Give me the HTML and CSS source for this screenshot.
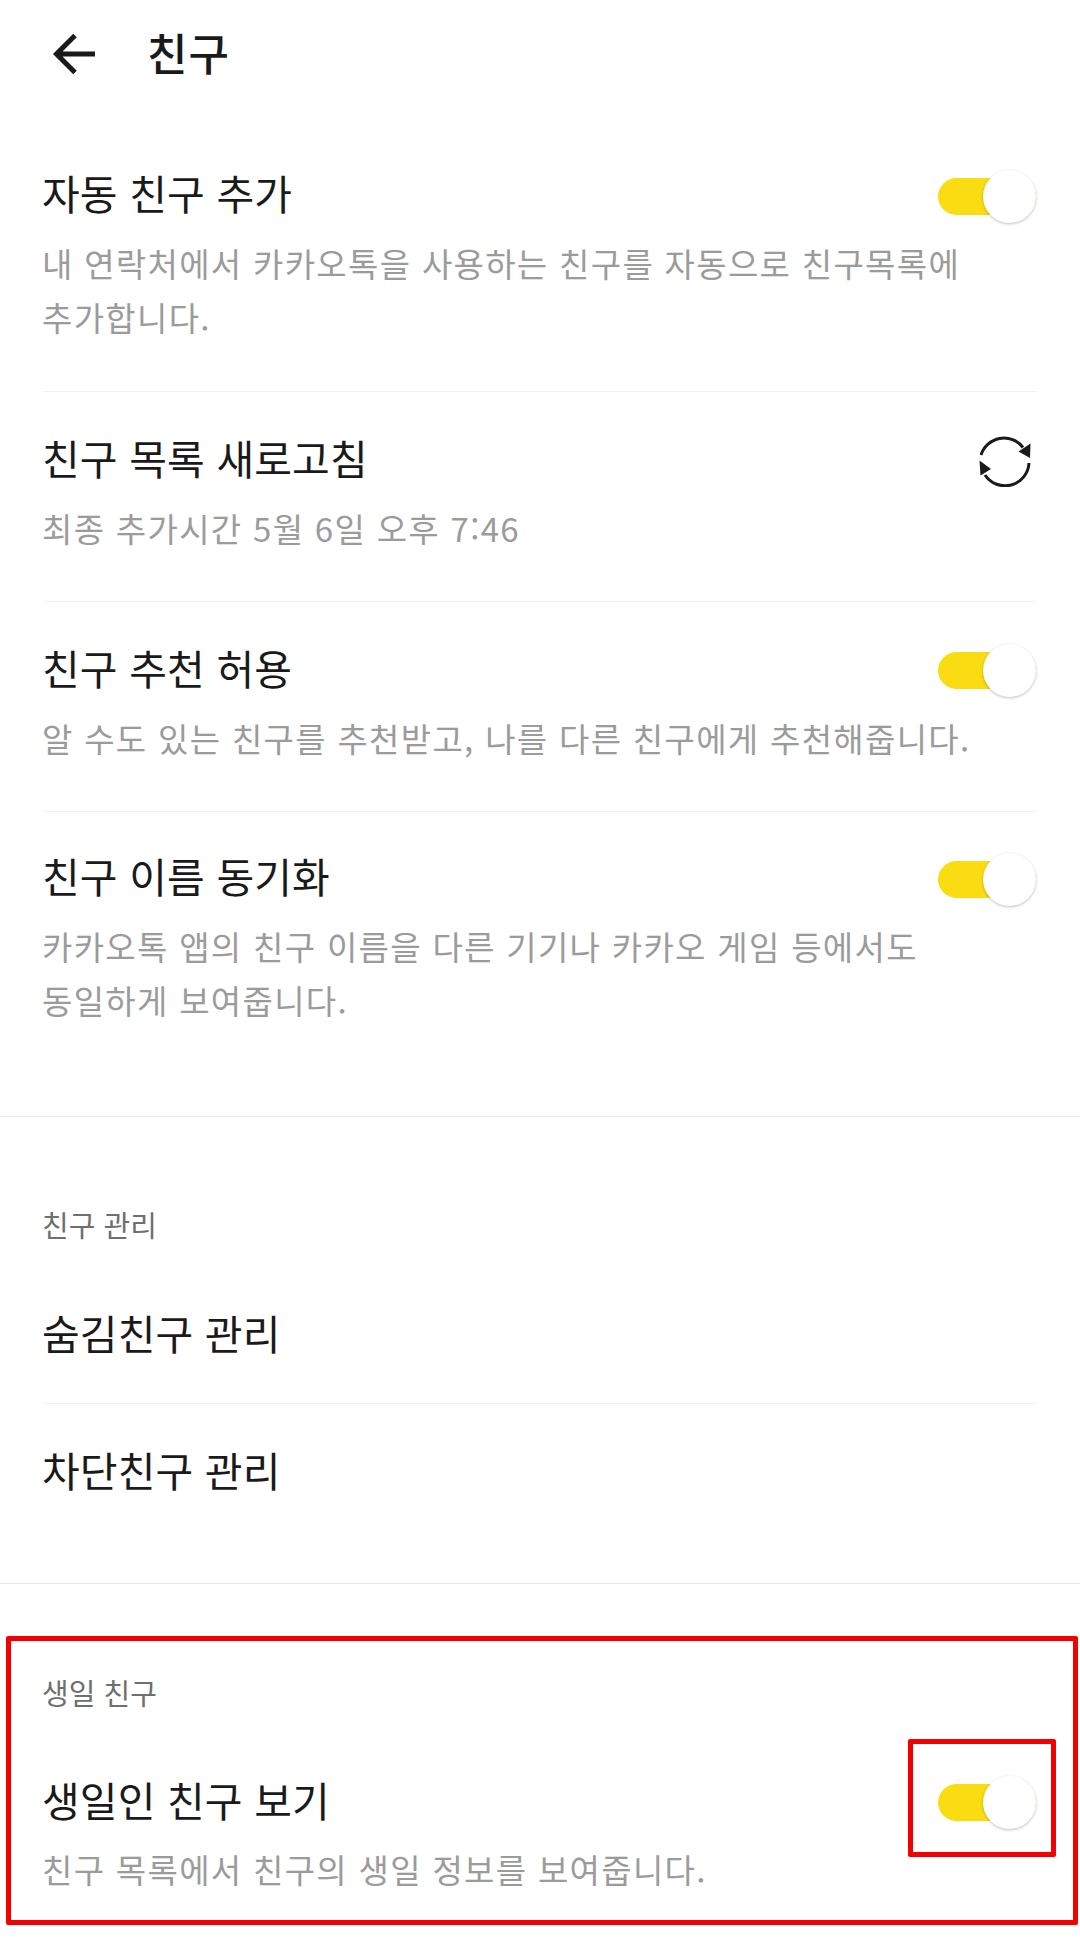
FILE: index.html
```html
<!DOCTYPE html>
<html lang="ko">
<head>
<meta charset="utf-8">
<title>친구</title>
<link rel="stylesheet" href="styles.css">
</head>
<body>
<div class="page">
  <header class="appbar">
    <svg class="back" viewBox="0 0 50 50" width="50" height="50" aria-hidden="true"><path d="M46 25H7M26 6.500 7.500 25 26 43.500" fill="none" stroke="#1a1a1a" stroke-width="5"/></svg>
    <h1 class="appbar-title">친구</h1>
  </header>

  <section class="section section-first">
    <div class="row row-first">
      <div class="row-text">
        <div class="row-title">자동 친구 추가</div>
        <p class="row-desc">내 연락처에서 카카오톡을 사용하는 친구를 자동으로 친구목록에 추가합니다.</p>
      </div>
      <span class="switch"><span class="knob"></span></span>
    </div>
    <div class="row row-mid">
      <div class="row-text">
        <div class="row-title">친구 목록 새로고침</div>
        <p class="row-desc">최종 추가시간 5월 6일 오후 7:46</p>
      </div>
      <svg class="refresh" viewBox="0 0 54 54" width="54" height="54" aria-hidden="true">
        <path d="M3 22A24 24 0 0 1 45 14.500" fill="none" stroke="#1a1a1a" stroke-width="3"/>
        <path d="M40.500 18.500 52.500 10.500 52 25Z" fill="#1a1a1a"/>
        <path d="M51 30A24 24 0 0 1 7 42" fill="none" stroke="#1a1a1a" stroke-width="3"/>
        <path d="M1.500 27.500 13 36 2.500 42.500Z" fill="#1a1a1a"/>
      </svg>
    </div>
    <div class="row row-mid">
      <div class="row-text">
        <div class="row-title">친구 추천 허용</div>
        <p class="row-desc">알 수도 있는 친구를 추천받고, 나를 다른 친구에게 추천해줍니다.</p>
      </div>
      <span class="switch"><span class="knob"></span></span>
    </div>
    <div class="row row-name">
      <div class="row-text">
        <div class="row-title">친구 이름 동기화</div>
        <p class="row-desc">카카오톡 앱의 친구 이름을 다른 기기나 카카오 게임 등에서도 동일하게 보여줍니다.</p>
      </div>
      <span class="switch"><span class="knob"></span></span>
    </div>
  </section>

  <section class="section section-manage">
    <h2 class="section-label">친구 관리</h2>
    <div class="row row-hidden"><div class="row-text"><div class="row-title">숨김친구 관리</div></div></div>
    <div class="row row-blocked"><div class="row-text"><div class="row-title">차단친구 관리</div></div></div>
  </section>

  <section class="section-birthday">
    <h2 class="section-label">생일 친구</h2>
    <div class="row row-birthday">
      <div class="row-text">
        <div class="row-title">생일인 친구 보기</div>
        <p class="row-desc">친구 목록에서 친구의 생일 정보를 보여줍니다.</p>
      </div>
      <span class="switch"><span class="knob"></span></span>
    </div>
  </section>

  <div class="mark mark-section"></div>
  <div class="mark mark-switch"></div>
</div>
</body>
</html>
```
FILE: styles.css
```css
* { box-sizing: border-box; }
html, body { margin: 0; padding: 0; background: #fff; }
body { font-family: "Noto Sans CJK KR", "Noto Sans", sans-serif; color: #1a1a1a; }
.page { position: relative; width: 1080px; height: 1960px; overflow: hidden; }

.appbar { display: flex; align-items: center; height: 128px; padding: 0 0 24px 49px; gap: 48px; }
.back { flex: none; position: relative; top: 2px; }
.appbar-title { margin: 0; font-size: 44px; line-height: 54px; font-weight: 500; letter-spacing: 1px; }

.section { border-bottom: 1px solid #e9e9e9; }
.section-first { height: 989px; }
.section-manage { height: 467px; padding-top: 1px; }

.row { display: flex; justify-content: space-between; align-items: flex-start; margin: 0 43px; padding: 37px 0 0; height: 210px; border-bottom: 1px solid #f2f2f2; }
.row-first { height: 264px; }
.row-mid { padding-top: 38px; }
.row-name { padding-top: 36px; border-bottom: 0; }
.row-hidden { height: 152px; padding-top: 53px; }
.row-blocked { height: 120px; padding-top: 38px; border-bottom: 0; }
.row-birthday { padding-top: 52px; border-bottom: 0; }

.row-text { width: 930px; flex: none; margin: 0 -930px 0 -1px; }
.row-title { font-size: 41px; line-height: 54px; letter-spacing: 0.100px; color: #1a1a1a; }
.row-desc { margin: 17px 0 0; font-size: 33px; line-height: 54px; letter-spacing: 1.300px; color: #9b9b9b; word-break: keep-all; }
.row-birthday .row-desc { margin-top: 16px; }

.section-label { margin: 0 42px; padding-top: 78px; font-size: 29px; line-height: 56px; font-weight: 400; color: #6f6f6f; }
.section-birthday .section-label { padding-top: 80px; }

.switch { position: relative; flex: none; width: 98px; height: 37px; margin: 13px 1px 0 auto; border-radius: 19px; background: #fadc12; }
.row-mid .switch, .row-birthday .switch { margin-top: 12px; }
.knob { position: absolute; right: 0; top: -8px; width: 53px; height: 53px; border-radius: 50%; background: #fff; box-shadow: 0 1px 3px rgba(0,0,0,.25); }
.refresh { flex: none; margin: 3px 5px 0 auto; }

.mark { position: absolute; border: 5px solid #f50000; border-radius: 2px; }
.mark-section { left: 6px; top: 1636px; width: 1072px; height: 289px; }
.mark-switch { left: 908px; top: 1739px; width: 148px; height: 118px; }
```
